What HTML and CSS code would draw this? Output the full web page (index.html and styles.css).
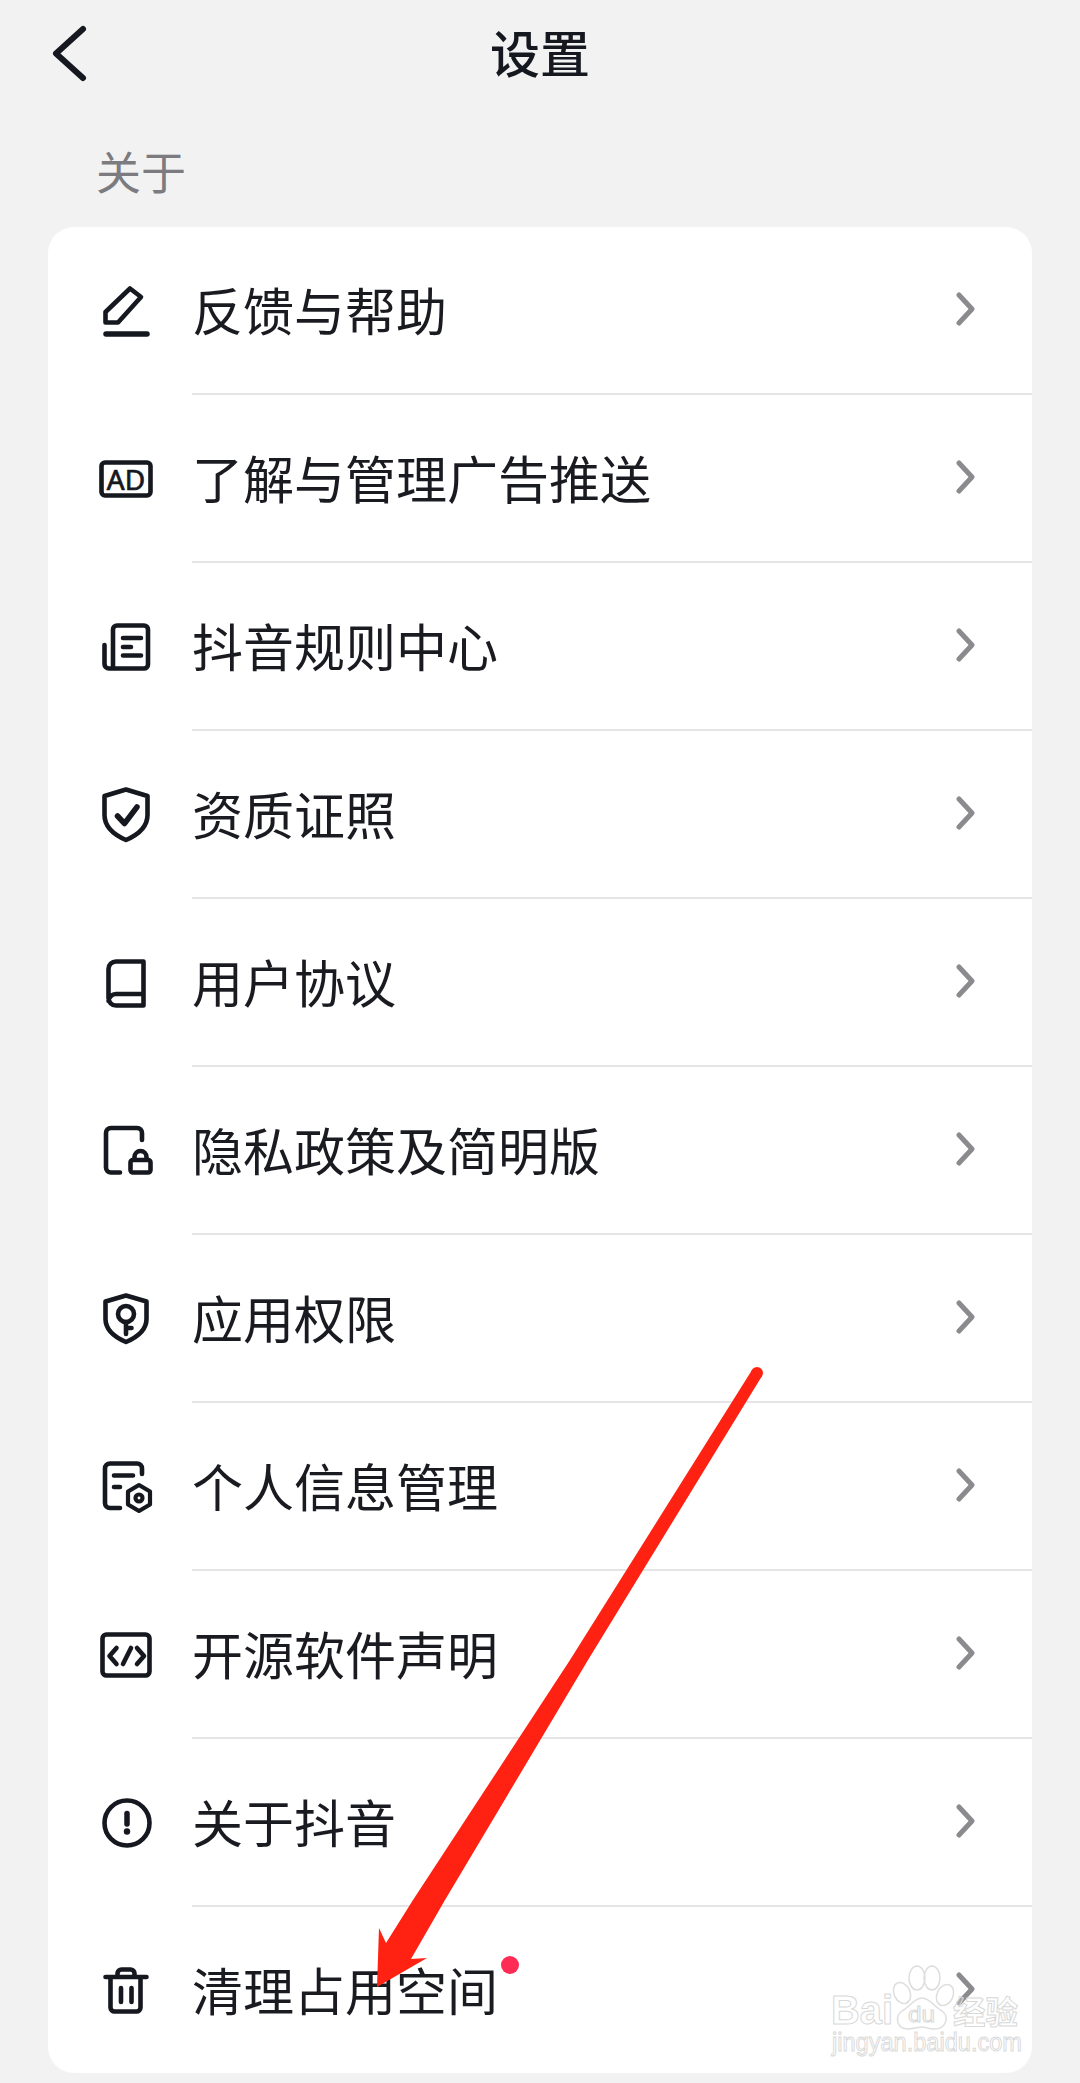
FILE: index.html
```html
<!DOCTYPE html>
<html lang="zh-CN">
<head>
<meta charset="utf-8">
<title>设置</title>
<link rel="stylesheet" href="styles.css">
</head>
<body>
<div class="page">
  <header class="topbar">
    <svg class="back" viewBox="0 0 40 60" aria-hidden="true"><path d="M34 5 L7 29.500 L34 54"/></svg>
    <h1 class="title">设置</h1>
  </header>
  <div class="section-label">关于</div>
  <main class="card">
    <div class="row">
      <svg class="icon" viewBox="0 0 60 60"><path d="M34 7.500 L45 16 L22 41.500 H9.500 V31 Z"/><path class="thick" d="M10 53 H51"/></svg>
      <div class="row-body"><span class="label">反馈与帮助</span><svg class="chev" viewBox="0 0 20 36"><path d="M3 4 L16 18 L3 32"/></svg></div>
    </div>
    <div class="row">
      <svg class="icon" viewBox="0 0 60 60"><rect x="5.500" y="13.500" width="49" height="33" rx="3.500"/><text class="ad" x="30" y="40.500" text-anchor="middle">AD</text></svg>
      <div class="row-body"><span class="label">了解与管理广告推送</span><svg class="chev" viewBox="0 0 20 36"><path d="M3 4 L16 18 L3 32"/></svg></div>
    </div>
    <div class="row">
      <svg class="icon" viewBox="0 0 60 60"><path d="M8.500 28 V47 A4.500 4.500 0 0 0 13 51.500 H48 A4 4 0 0 0 52 47.500 V12.500 A4 4 0 0 0 48 8.500 H21 A4 4 0 0 0 17 12.500 V51"/><path d="M27 21 H45 M27 30 H35 M27 38.500 H45"/></svg>
      <div class="row-body"><span class="label">抖音规则中心</span><svg class="chev" viewBox="0 0 20 36"><path d="M3 4 L16 18 L3 32"/></svg></div>
    </div>
    <div class="row">
      <svg class="icon" viewBox="0 0 60 60"><path d="M30 4.500 L51.500 11 V30 C51.500 42 41.500 50 30 55 C18.500 50 8.500 42 8.500 30 V11 Z"/><path class="thick" d="M21.500 31 L28.500 38.500 L41 22"/></svg>
      <div class="row-body"><span class="label">资质证照</span><svg class="chev" viewBox="0 0 20 36"><path d="M3 4 L16 18 L3 32"/></svg></div>
    </div>
    <div class="row">
      <svg class="icon" viewBox="0 0 60 60"><path d="M47.500 41 V8.500 H20 A7.500 7.500 0 0 0 12.500 16 V45 A7.500 7.500 0 0 0 20 52.500 H47.500 V41 H20 A7.500 7.500 0 0 0 12.500 48"/></svg>
      <div class="row-body"><span class="label">用户协议</span><svg class="chev" viewBox="0 0 20 36"><path d="M3 4 L16 18 L3 32"/></svg></div>
    </div>
    <div class="row">
      <svg class="icon" viewBox="0 0 60 60"><path d="M46 19 V12 A5 5 0 0 0 41 7 H15 A5 5 0 0 0 10 12 V46.500 A5 5 0 0 0 15 51.500 H24"/><rect x="34.500" y="39" width="20" height="12.500" rx="2.500"/><path d="M38.500 38 V36 A6 6 0 0 1 50.500 36 V38"/></svg>
      <div class="row-body"><span class="label">隐私政策及简明版</span><svg class="chev" viewBox="0 0 20 36"><path d="M3 4 L16 18 L3 32"/></svg></div>
    </div>
    <div class="row">
      <svg class="icon" viewBox="0 0 60 60"><path d="M30 6.500 L50.500 12.500 V30 C50.500 41 40.500 48.500 30 53 C19.500 48.500 9.500 41 9.500 30 V12.500 Z"/><circle cx="30" cy="25" r="8"/><path d="M30 33 V45 M30 39 H35.500"/></svg>
      <div class="row-body"><span class="label">应用权限</span><svg class="chev" viewBox="0 0 20 36"><path d="M3 4 L16 18 L3 32"/></svg></div>
    </div>
    <div class="row">
      <svg class="icon" viewBox="0 0 60 60"><path d="M46 17 V11.500 A5 5 0 0 0 41 6.500 H14 A5 5 0 0 0 9 11.500 V46 A5 5 0 0 0 14 51 H24"/><path d="M18 18.500 H37 M18 30 H24"/><path class="mid" d="M43 28 L54 34.500 V47.500 L43 54 L32 47.500 V34.500 Z"/><circle class="mid" cx="43" cy="41" r="3.500"/></svg>
      <div class="row-body"><span class="label">个人信息管理</span><svg class="chev" viewBox="0 0 20 36"><path d="M3 4 L16 18 L3 32"/></svg></div>
    </div>
    <div class="row">
      <svg class="icon" viewBox="0 0 60 60"><rect x="6.500" y="9.500" width="47" height="41" rx="4"/><path d="M20.500 23 L13.500 31 L20.500 39 M35 23 L27 39 M41 23 L48 31 L41 39"/></svg>
      <div class="row-body"><span class="label">开源软件声明</span><svg class="chev" viewBox="0 0 20 36"><path d="M3 4 L16 18 L3 32"/></svg></div>
    </div>
    <div class="row">
      <svg class="icon" viewBox="0 0 60 60"><circle cx="31" cy="30" r="22.500"/><path class="thick" d="M31 20.500 V31"/><circle class="fill" cx="31" cy="38.500" r="3.200"/></svg>
      <div class="row-body"><span class="label">关于抖音</span><svg class="chev" viewBox="0 0 20 36"><path d="M3 4 L16 18 L3 32"/></svg></div>
    </div>
    <div class="row">
      <svg class="icon" viewBox="0 0 60 60"><path d="M9.500 17 H50.500 M21.500 16 V13.500 A4 4 0 0 1 25.500 9.500 H34.500 A4 4 0 0 1 38.500 13.500 V16 M14.500 17 V47.500 A4 4 0 0 0 18.500 51.500 H40.500 A4 4 0 0 0 44.500 47.500 V17 M25 28 V42 M35.500 28 V42"/></svg>
      <div class="row-body"><span class="label label-dot">清理占用空间<i class="dot"></i></span><svg class="chev" viewBox="0 0 20 36"><path d="M3 4 L16 18 L3 32"/></svg></div>
    </div>
  </main>
  <svg class="overlay" viewBox="0 0 1080 2083" aria-hidden="true">
    <g class="wm">
      <ellipse cx="902" cy="1993" rx="8" ry="11" transform="rotate(-25 902 1993)"/>
      <ellipse cx="917" cy="1978" rx="8" ry="12"/>
      <ellipse cx="932" cy="1978" rx="8" ry="12"/>
      <ellipse cx="945" cy="1995" rx="8" ry="11" transform="rotate(25 945 1995)"/>
      <path d="M922 1998 C930 1998 934 2007 942 2011 C950 2017 946 2029 934 2029 C928 2029 926 2027 922 2027 C918 2027 914 2029 908 2029 C897 2029 894 2017 902 2011 C910 2007 914 1998 922 1998 Z"/>
      <text class="wm-big" x="831" y="2024" textLength="62" lengthAdjust="spacingAndGlyphs">Bai</text>
      <text class="wm-du" x="908" y="2022" textLength="27" lengthAdjust="spacingAndGlyphs">du</text>
      <text class="wm-cn" x="953" y="2024" textLength="65" lengthAdjust="spacingAndGlyphs">经验</text>
      <text class="wm-url" x="832" y="2051" textLength="190" lengthAdjust="spacingAndGlyphs">jingyan.baidu.com</text>
    </g>
    <circle class="arrow" cx="757" cy="1373" r="6"/>
    <polygon class="arrow" points="752,1370 570,1660 413,1900 386,1943 379,1928 377,1987 427,1958 411,1959 445,1900 588,1660 762,1376"/>
  </svg>
</div>
</body>
</html>
```
FILE: styles.css
```css
* { box-sizing: border-box; }
html, body { margin: 0; padding: 0; }
body {
  width: 1080px;
  height: 2083px;
  overflow: hidden;
  background: #f2f2f3;
  font-family: "Noto Sans CJK SC", "Noto Sans", sans-serif;
  color: #16181f;
}
.page { position: relative; width: 1080px; height: 2083px; padding-top: 1px; }
.topbar { position: relative; height: 99px; display: flex; align-items: center; justify-content: center; }
.back {
  position: absolute;
  left: 49px;
  top: 23px;
  width: 40px;
  height: 60px;
  fill: none;
  stroke: #16181f;
  stroke-width: 6;
  stroke-linecap: round;
  stroke-linejoin: round;
}
.title { margin: 0; font-size: 50px; line-height: 64px; font-weight: 500; }
.section-label {
  margin: 39px 0 24px 96px;
  font-size: 45px;
  line-height: 64px;
  color: #7b7b80;
}
.card {
  margin: 0 48px;
  width: 984px;
  height: 1846px;
  background: #fff;
  border-radius: 26px;
  overflow: hidden;
}
.row { display: flex; align-items: center; height: 168px; padding-left: 48px; }
.row:last-child { height: 166px; }
.icon {
  flex: none;
  width: 60px;
  height: 60px;
  margin-right: 36px;
  fill: none;
  stroke: #16181f;
  stroke-width: 4.6;
  stroke-linecap: round;
  stroke-linejoin: round;
}
.icon .thick { stroke-width: 5.5; }
.icon .mid { stroke-width: 4.2; }
.icon .fill { fill: #16181f; stroke: none; }
.icon .ad { fill: #16181f; stroke: #16181f; stroke-width: 0.7; font-family: "Noto Sans", sans-serif; font-size: 28px; }
.row-body {
  flex: 1;
  height: 100%;
  display: flex;
  align-items: center;
  justify-content: space-between;
  padding-right: 56px;
  padding-bottom: 3px;
  border-bottom: 2px solid #e5e5e7;
}
.row:last-child .row-body { border-bottom: 0; padding-bottom: 3px; }
.label { position: relative; font-size: 51px; line-height: 72px; color: #1a1b21; }
.dot {
  position: absolute;
  left: 309px;
  top: 3px;
  width: 18px;
  height: 18px;
  border-radius: 50%;
  background: #fe2c55;
}
.chev {
  flex: none;
  width: 20px;
  height: 36px;
  fill: none;
  stroke: #8a8a8f;
  stroke-width: 5;
  stroke-linecap: round;
  stroke-linejoin: round;
}
.overlay { position: absolute; left: 0; top: 0; width: 1080px; height: 2083px; pointer-events: none; }
.arrow { fill: #ff2213; }
.wm ellipse, .wm path { fill: none; stroke: #dedede; stroke-width: 1.5; }
.wm text { fill: #fff; fill-opacity: 0.25; stroke: #d9d9d9; stroke-width: 1; font-family: "Liberation Sans", sans-serif; }
.wm-big { font-size: 40px; font-weight: 700; }
.wm-du { font-size: 22px; }
.wm .wm-cn { font-family: "Noto Sans CJK SC", sans-serif; font-size: 32px; font-weight: 700; }
.wm-url { font-size: 26px; }
```
